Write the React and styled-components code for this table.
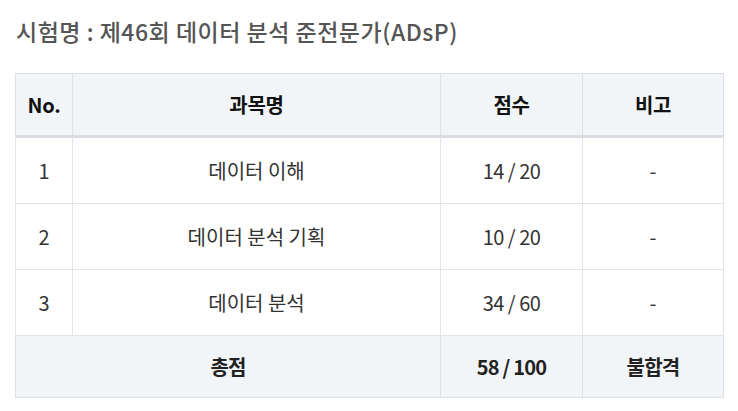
import React from 'react';
import styled, { createGlobalStyle } from 'styled-components';

const rows = [
  { no: 1, subject: '데이터 이해', score: '14 / 20', note: '-' },
  { no: 2, subject: '데이터 분석 기획', score: '10 / 20', note: '-' },
  { no: 3, subject: '데이터 분석', score: '34 / 60', note: '-' },
];

function App() {
  return (
    <Page>
      <GlobalStyle />
      <Title>시험명 : 제46회 데이터 분석 준전문가(ADsP)</Title>
      <Table>
        <colgroup>
          <col style={{ width: 57 }} />
          <col style={{ width: 368 }} />
          <col style={{ width: 142 }} />
          <col />
        </colgroup>
        <thead>
          <tr>
            <Th>No.</Th>
            <Th>과목명</Th>
            <Th>점수</Th>
            <Th>비고</Th>
          </tr>
        </thead>
        <tbody>
          {rows.map((r) => (
            <tr key={r.no}>
              <Td>{r.no}</Td>
              <Td>{r.subject}</Td>
              <Td $tight>{r.score}</Td>
              <Td>{r.note}</Td>
            </tr>
          ))}
        </tbody>
        <tfoot>
          <tr>
            <Total colSpan={2}>총점</Total>
            <Total>58 / 100</Total>
            <Total>불합격</Total>
          </tr>
        </tfoot>
      </Table>
    </Page>
  );
}

const GlobalStyle = createGlobalStyle`
  body {
    margin: 0;
    background: #fff;
    font-family: "Noto Sans CJK KR", "Noto Sans", sans-serif;
  }
`;

const Page = styled.div`
  padding: 14px 15px 0 15px;
`;

const Title = styled.h2`
  margin: 0 0 25px 1px;
  font-size: 23px;
  line-height: 34px;
  font-weight: 500;
  letter-spacing: 0.5px;
  color: #555;
`;

const Table = styled.table`
  width: 709px;
  border-collapse: collapse;
  table-layout: fixed;
  text-align: center;
`;

const Th = styled.th`
  height: 61px;
  padding: 0;
  background: #f2f5f7;
  border: 1px solid #dde1e6;
  border-bottom: 3px solid #dadee3;
  font-size: 20px;
  font-weight: 700;
  color: #111;
  letter-spacing: -0.3px;
`;

const Td = styled.td`
  height: 65px;
  padding: 0;
  border: 1px solid #e1e4e8;
  font-size: 20px;
  font-weight: 400;
  color: #333;
  letter-spacing: ${(p) => (p.$tight ? '-0.5px' : '0')};
`;

const Total = styled.td`
  height: 61px;
  padding: 0;
  background: #f2f5f7;
  border: 1px solid #dde1e6;
  font-size: 20px;
  font-weight: 700;
  color: #222;
  letter-spacing: -0.8px;
`;

export default App;
